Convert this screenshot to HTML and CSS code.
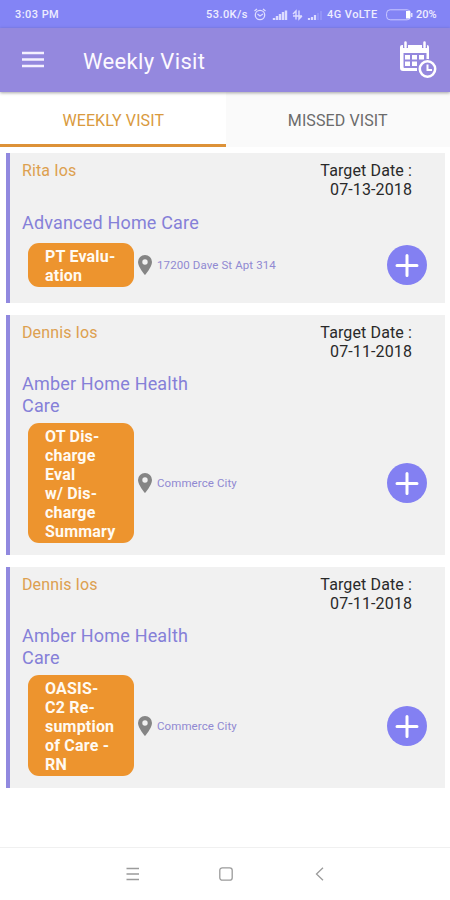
FILE: index.html
```html
<!DOCTYPE html>
<html lang="en">
<head>
<meta charset="utf-8">
<title>Weekly Visit</title>
<link rel="stylesheet" href="styles.css">
</head>
<body>
<svg class="defs" width="0" height="0">
  <symbol id="pin" viewBox="0 0 14 20"><path fill-rule="evenodd" d="M7 0a7 7 0 0 0-7 7c0 5 7 13 7 13s7-8 7-13a7 7 0 0 0-7-7zm0 4.300a2.700 2.700 0 1 1 0 5.400 2.700 2.700 0 0 1 0-5.400z"/></symbol>
  <symbol id="plus" viewBox="0 0 40 40"><circle cx="20" cy="20" r="20" fill="#8380f2"/><path d="M20 10.500v20M10 20.500h20" stroke="#fff" stroke-width="3" stroke-linecap="round"/></symbol>
</svg>
<div class="status">
  <span class="time">3:03 PM</span>
  <span class="speed">53.0K/s</span>
  <svg class="status-icons" width="72" height="14" viewBox="0 0 72 14" fill="none" stroke="#dddcff">
    <circle cx="7" cy="7" r="4.700" stroke-width="1.300"/><path d="M1.500 3l2.500-2M12.500 3l-2.500-2M4.500 6L7 8l3-2" stroke-width="1.300"/>
    <path d="M21 12v-2M24 12v-4M27 12v-6M30 12V4M33 12V2.500" stroke-width="2.400"/>
    <path d="M43 11.500V3l-3 3M46 2.500V11l3-3M40 8h9" stroke-width="1.400"/>
    <path d="M56 12v-2M59 12v-3M62 12V7" stroke-width="2.200"/><path d="M65 12V5M68 12V3" stroke-width="1.500" opacity=".25"/>
  </svg>
  <span class="network">4G VoLTE</span>
  <svg class="battery" width="27" height="12" viewBox="0 0 27 12"><rect x=".6" y=".8" width="24" height="10" rx="3.500" fill="none" stroke="#c9c8ff"/><path d="M20 2h4v7.500h-4z" fill="#fff"/><path d="M25 4h1.500v4H25z" fill="#dddcff"/></svg>
  <span class="percent">20%</span>
</div>
<header class="appbar">
  <svg class="menu" width="22" height="17" viewBox="0 0 22 17" fill="none" stroke="#f4f0ff" stroke-width="2.600"><path d="M0 2h22M0 8.500h22M0 15h22"/></svg>
  <h1>Weekly Visit</h1>
  <svg class="calendar" width="38" height="38" viewBox="0 0 38 38">
    <path d="M3 4h25a2 2 0 0 1 2 2v12.500h-2.500V12h-23v14a1 1 0 0 0 1 1H18v3H4a3 3 0 0 1-3-3V6a2 2 0 0 1 2-2z" fill="#fff"/>
    <path d="M6.500 0v7M25.500 0v7" stroke="#9488de" stroke-width="5"/><path d="M6.500 1.500v4.500M25.500 1.500v4.500" stroke="#fff" stroke-width="2.500" stroke-linecap="round"/>
    <path d="M6 14h5v4.500H6zM13 14h5v4.500h-5zM20 14h5v4.500h-5zM6 20.500h5V25H6zM13 20.500h5V25h-5z" fill="#fff"/>
    <circle cx="28.500" cy="28" r="10" fill="#9488de"/><circle cx="28.500" cy="28" r="7.700" fill="none" stroke="#fff" stroke-width="2.500"/><path d="M28.500 23.500V29H33" fill="none" stroke="#fff" stroke-width="2"/>
  </svg>
</header>
<nav class="tabs">
  <div class="tab active"><span>WEEKLY VISIT</span></div>
  <div class="tab"><span>MISSED VISIT</span></div>
</nav>
<main class="list">
  <article class="card">
    <div class="top"><div class="name">Rita Ios</div><div class="date">Target Date :<br>07-13-2018</div></div>
    <div class="agency single">Advanced Home Care</div>
    <div class="visit"><div class="badge">PT Evalu-<br>ation</div><svg class="pin"><use href="#pin"/></svg><span class="address">17200 Dave St Apt 314</span><svg class="add"><use href="#plus"/></svg></div>
  </article>
  <article class="card">
    <div class="top"><div class="name">Dennis Ios</div><div class="date">Target Date :<br>07-11-2018</div></div>
    <div class="agency">Amber Home Health<br>Care</div>
    <div class="visit"><div class="badge">OT Dis-<br>charge<br>Eval<br>w/ Dis-<br>charge<br>Summary</div><svg class="pin"><use href="#pin"/></svg><span class="address">Commerce City</span><svg class="add"><use href="#plus"/></svg></div>
  </article>
  <article class="card">
    <div class="top"><div class="name">Dennis Ios</div><div class="date">Target Date :<br>07-11-2018</div></div>
    <div class="agency">Amber Home Health<br>Care</div>
    <div class="visit"><div class="badge">OASIS-<br>C2 Re-<br>sumption<br>of Care -<br>RN</div><svg class="pin"><use href="#pin"/></svg><span class="address">Commerce City</span><svg class="add"><use href="#plus"/></svg></div>
  </article>
</main>
<footer class="navbar">
  <svg width="14" height="14" viewBox="0 0 14 14"><path d="M.5 1.500h12.500M.5 7h12.500M.5 12.500h12.500"/></svg>
  <svg width="14" height="14" viewBox="0 0 14 14"><rect x=".8" y=".8" width="12.400" height="12.400" rx="2.500"/></svg>
  <svg class="back" width="14" height="14" viewBox="0 0 14 14"><path d="M10 .8L3.500 7l6.500 6.200"/></svg>
</footer>
</body>
</html>
```
FILE: styles.css
```css
* { box-sizing: border-box; }
body {
  margin: 0;
  height: 900px;
  display: flex;
  flex-direction: column;
  background: #fff;
  font-family: Roboto, "Liberation Sans", sans-serif;
  white-space: nowrap;
  overflow: hidden;
}
svg { display: block; flex: none; }
.defs { display: none; }
.status {
  height: 28px;
  flex: none;
  display: flex;
  align-items: center;
  padding: 1px 13px 0 15px;
  background: #8384f5;
  color: #eeedff;
  font-size: 11px;
  font-weight: 500;
  letter-spacing: .45px;
}
.speed { margin-left: auto; width: 42px; }
.status-icons { margin-left: 5px; }
.network { width: 55px; margin-left: 2px; }
.battery { margin-left: 4px; }
.percent { width: 21px; margin-left: 3px; letter-spacing: 0; }
.appbar {
  height: 64px;
  flex: none;
  display: flex;
  align-items: center;
  padding: 0 13px 0 22px;
  background: #9488de;
  box-shadow: 0 1px 3px rgba(0, 0, 0, .35);
  position: relative;
}
.menu { margin-bottom: 1px; }
h1 {
  margin: 3px 0 0 39px;
  color: #fcf9ff;
  font-size: 22px;
  font-weight: 400;
  line-height: 26px;
  letter-spacing: .35px;
}
.calendar { margin-left: auto; }
.tabs { display: flex; height: 55px; flex: none; }
.tab {
  flex: 1;
  display: flex;
  justify-content: center;
  align-items: center;
  background: #fafafa;
  color: #6b6b6b;
  font-size: 16px;
  letter-spacing: .1px;
  padding-top: 1px;
}
.tab.active {
  background: #fff;
  color: #d99a3d;
  border-bottom: 3px solid #dd9238;
  padding: 4px 0 0 1px;
}
.list {
  flex: 1;
  display: flex;
  flex-direction: column;
  gap: 12px;
  padding: 6px 5px 0 6px;
}
.card {
  min-height: 150px;
  padding: 8px 18px 12px 12px;
  border-left: 4px solid #9189df;
  background: #f1f1f1;
}
.top {
  display: flex;
  justify-content: space-between;
  height: 49px;
  padding-right: 15px;
  font-size: 16px;
  line-height: 19px;
  letter-spacing: .12px;
}
.name { color: #dda04f; }
.date { color: #292929; text-align: right; }
.agency {
  color: #8580d8;
  font-size: 18px;
  line-height: 22px;
  letter-spacing: .18px;
  padding: 1px 0 6px;
}
.agency.single { padding: 2px 0 9px; }
.visit { display: flex; align-items: center; padding-left: 6px; }
.badge {
  width: 106px;
  padding: 4px 0 2px 17px;
  border-radius: 11px;
  background: #ed942e;
  color: #fffaf2;
  font-size: 16px;
  font-weight: 700;
  line-height: 19px;
  letter-spacing: .2px;
}
.pin { width: 14px; height: 20px; margin-left: 4px; fill: #858585; }
.address {
  margin-left: 5px;
  color: #9089d2;
  font-size: 11.500px;
  letter-spacing: .1px;
}
.add { width: 40px; height: 40px; margin: 0 0 0 auto; }
.navbar {
  height: 53px;
  flex: none;
  display: flex;
  justify-content: center;
  align-items: center;
  gap: 79px;
  padding-left: 2px;
  border-top: 1px solid #f0f0f0;
}
.navbar svg { fill: none; stroke: #9b9b9b; stroke-width: 1.300; }
.navbar .back { margin-left: 1px; }
```
